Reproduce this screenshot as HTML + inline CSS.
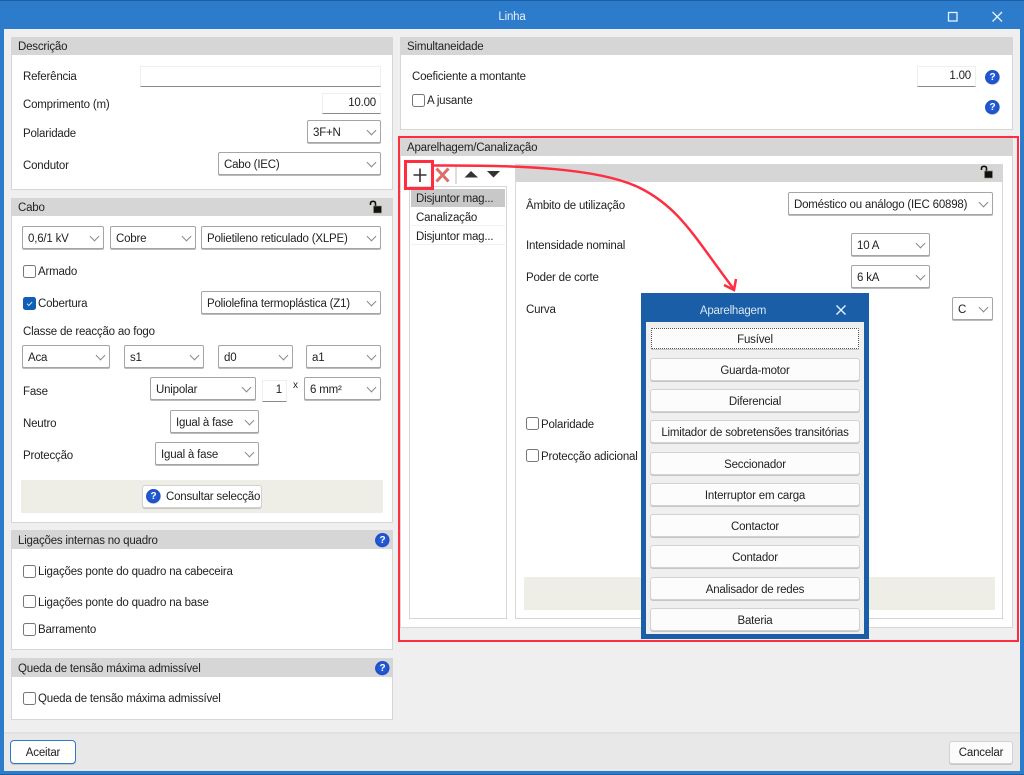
<!DOCTYPE html>
<html lang="pt"><head><meta charset="utf-8"><title>Linha</title>
<style>
html,body{margin:0;padding:0;width:1024px;height:775px;overflow:hidden;background:#2d7bcb}
body{position:relative;font:11.5px/16px "Liberation Sans",sans-serif;letter-spacing:-.2px;color:#222}
div,span{box-sizing:border-box}
.a,.t,.p,.h,.s,.i,.c,.b,.q,.l{position:absolute}
.t{white-space:nowrap;margin-top:1px}
.p{background:#fff;border:1px solid #d6d6d6}
.h{background:#d6d6d6;height:18px;line-height:20px;padding-left:7px;white-space:nowrap}
.s{background:#fff;border:1px solid #a5a5a5;border-radius:2px;padding-left:5px;line-height:25px;white-space:nowrap;box-shadow:0 1px 0 #bbb}
.s:after{content:"";position:absolute;right:5px;top:6px;width:6px;height:6px;border-right:1px solid #888;border-bottom:1px solid #888;transform:rotate(45deg)}
.i{background:#fff;border-top:1px solid #eee;border-left:1px solid #eee;border-right:1px solid #eee;border-bottom:1px solid #8a8a8a;text-align:right;padding-right:4px;line-height:19px}
.c{width:13px;height:13px;background:#fff;border:1px solid #777;border-radius:2.5px}
.b{background:#fcfcfc;border:1px solid #d2d2d2;border-radius:3px;text-align:center;line-height:25px;white-space:nowrap;box-shadow:0 1px 0 #c6c6c6}
.q{width:15px;height:15px;border-radius:50%;background:radial-gradient(circle at 48% 46%,#2a62e0 0,#1c50c4 62%,#c9d3e6 68%,#e3e7ef 82%,#7d8698 100%);color:#fff;font:bold 10px/15px "Liberation Sans",sans-serif;letter-spacing:0;text-align:center}
.l{width:15px;height:14px}
.m{position:absolute;left:646px;width:218px}
</style></head><body>

<div class="a" style="left:0;top:0;width:1024px;height:1px;background:#1a5fa8"></div>
<div class="t" style="left:0;width:1024px;top:8px;text-align:center;color:#e6f0fa">Linha</div>
<svg class="a" style="left:940px;top:8px" width="70" height="18" viewBox="0 0 70 18" fill="none" stroke="#e8f1fa" stroke-width="1.3"><rect x="8.500" y="4.500" width="8.500" height="8.500"/><path d="M52.500 4 L62 13.500 M62 4 L52.500 13.500"/></svg>

<div class="a" style="left:4px;top:29px;width:1016px;height:742px;background:#efefef"></div>
<div class="a" style="left:4px;top:732px;width:1016px;height:39px;background:#e8e8e8;border-top:2px solid #e1e1e1"></div>
<div class="a" style="left:0;top:774px;width:1024px;height:1px;background:#1a5fa8"></div>

<!-- Descrição -->
<div class="p" style="left:11px;top:37px;width:382px;height:153px"></div>
<div class="h" style="left:11px;top:37px;width:382px">Descrição</div>
<div class="t" style="left:23px;top:68px">Referência</div>
<div class="i" style="left:140px;top:66px;width:241px;height:21px"></div>
<div class="t" style="left:23px;top:96px">Comprimento (m)</div>
<div class="i" style="left:322px;top:93px;width:59px;height:21px">10.00</div>
<div class="t" style="left:23px;top:125px">Polaridade</div>
<div class="s" style="left:307px;top:120px;width:74px;height:23px">3F+N</div>
<div class="t" style="left:23px;top:157px">Condutor</div>
<div class="s" style="left:218px;top:152px;width:163px;height:23px">Cabo (IEC)</div>

<!-- Cabo -->
<div class="p" style="left:11px;top:198px;width:382px;height:325px"></div>
<div class="h" style="left:11px;top:198px;width:382px">Cabo</div>
<svg class="l" style="left:369px;top:200px" viewBox="0 0 15 14"><path d="M1.500 5 V3.500 Q1.500 1.300 4 1.300 Q6.500 1.300 6.500 3.500 V6" fill="none" stroke="#111" stroke-width="1.6"/><rect x="4.500" y="6" width="8" height="7" fill="#111" stroke="#8f8f6a" stroke-width=".6"/></svg>
<div class="s" style="left:22px;top:226px;width:82px;height:23px">0,6/1 kV</div>
<div class="s" style="left:110px;top:226px;width:86px;height:23px">Cobre</div>
<div class="s" style="left:201px;top:226px;width:180px;height:23px">Polietileno reticulado (XLPE)</div>
<div class="c" style="left:23px;top:265px"></div>
<div class="t" style="left:38px;top:263px">Armado</div>
<div class="c" style="left:23px;top:297px;background:#0f5fb4;border-color:#0f5fb4"></div>
<svg class="a" style="left:23px;top:297px" width="13" height="13" fill="none" stroke="#cfe2f6" stroke-width="1"><path d="M4 6.700 L5.800 8.500 L9.200 5"/></svg>
<div class="t" style="left:38px;top:295px">Cobertura</div>
<div class="s" style="left:201px;top:291px;width:180px;height:23px">Poliolefina termoplástica (Z1)</div>
<div class="t" style="left:23px;top:323px">Classe de reacção ao fogo</div>
<div class="s" style="left:22px;top:345px;width:88px;height:23px">Aca</div>
<div class="s" style="left:124px;top:345px;width:80px;height:23px">s1</div>
<div class="s" style="left:218px;top:345px;width:75px;height:23px">d0</div>
<div class="s" style="left:306px;top:345px;width:75px;height:23px">a1</div>
<div class="t" style="left:23px;top:383px">Fase</div>
<div class="s" style="left:150px;top:377px;width:106px;height:23px">Unipolar</div>
<div class="i" style="left:262px;top:380px;width:25px;height:22px">1</div>
<div class="t" style="left:293px;top:377px;font-size:10px">x</div>
<div class="s" style="left:304px;top:377px;width:77px;height:23px">6 mm²</div>
<div class="t" style="left:23px;top:415px">Neutro</div>
<div class="s" style="left:170px;top:410px;width:89px;height:23px">Igual à fase</div>
<div class="t" style="left:23px;top:447px">Protecção</div>
<div class="s" style="left:155px;top:442px;width:104px;height:23px">Igual à fase</div>
<div class="a" style="left:21px;top:480px;width:362px;height:33px;background:#eeeee6"></div>
<div class="b" style="left:142px;top:485px;width:120px;height:23px;text-align:left;padding-left:23px;background:#fff;line-height:23px">Consultar selecção</div>
<div class="q" style="left:146px;top:489px">?</div>

<!-- Ligações -->
<div class="p" style="left:11px;top:530px;width:382px;height:120px"></div>
<div class="h" style="left:11px;top:530px;width:382px;height:19px;line-height:23px">Ligações internas no quadro</div>
<div class="q" style="left:375px;top:533px">?</div>
<div class="c" style="left:23px;top:565px"></div>
<div class="t" style="left:38px;top:563px">Ligações ponte do quadro na cabeceira</div>
<div class="c" style="left:23px;top:595px"></div>
<div class="t" style="left:38px;top:594px">Ligações ponte do quadro na base</div>
<div class="c" style="left:23px;top:623px"></div>
<div class="t" style="left:38px;top:621px">Barramento</div>

<!-- Queda -->
<div class="p" style="left:11px;top:658px;width:382px;height:62px"></div>
<div class="h" style="left:11px;top:658px;width:382px;height:19px;line-height:23px">Queda de tensão máxima admissível</div>
<div class="q" style="left:375px;top:661px">?</div>
<div class="c" style="left:23px;top:692px"></div>
<div class="t" style="left:38px;top:690px">Queda de tensão máxima admissível</div>

<!-- Simultaneidade -->
<div class="p" style="left:400px;top:37px;width:613px;height:93px"></div>
<div class="h" style="left:400px;top:37px;width:613px">Simultaneidade</div>
<div class="t" style="left:412px;top:68px">Coeficiente a montante</div>
<div class="i" style="left:917px;top:66px;width:59px;height:21px">1.00</div>
<div class="q" style="left:985px;top:70px">?</div>
<div class="c" style="left:412px;top:94px"></div>
<div class="t" style="left:427px;top:92px">A jusante</div>
<div class="q" style="left:985px;top:100px">?</div>

<!-- Aparelhagem/Canalização -->
<div class="p" style="left:400px;top:138px;width:613px;height:490px"></div>
<div class="h" style="left:400px;top:138px;width:613px">Aparelhagem/Canalização</div>
<svg class="a" style="left:404px;top:162px" width="105" height="26" viewBox="0 0 105 26"><path d="M16 6.500 V20 M9.500 13 H22.500" stroke="#333" stroke-width="1.6" fill="none"/><path d="M32.500 6.500 L44.500 19.500 M44.500 6.500 L32.500 19.500" stroke="#d9706c" stroke-width="3" fill="none"/><path d="M52 4 V22" stroke="#bbb" stroke-width="1"/><path d="M60.500 15.500 L67 9 L74 15.500 Z M83 9 L96 9 L89.500 15.500 Z" fill="#333"/></svg>
<div class="p" style="left:409px;top:186px;width:98px;height:433px"></div>
<div class="a" style="left:411px;top:189px;width:94px;height:18px;background:#c8c8c8"></div>
<div class="t" style="left:416px;top:190px">Disjuntor mag...</div>
<div class="a" style="left:411px;top:207px;width:94px;height:19px;border-bottom:1px solid #f1f1f1"></div>
<div class="t" style="left:416px;top:209px">Canalização</div>
<div class="a" style="left:411px;top:226px;width:94px;height:19px;border-bottom:1px solid #f1f1f1"></div>
<div class="t" style="left:416px;top:228px">Disjuntor mag...</div>

<div class="p" style="left:515px;top:164px;width:488px;height:455px"></div>
<div class="h" style="left:515px;top:164px;width:488px"></div>
<svg class="l" style="left:980px;top:165px" viewBox="0 0 15 14"><path d="M1.500 5 V3.500 Q1.500 1.300 4 1.300 Q6.500 1.300 6.500 3.500 V6" fill="none" stroke="#111" stroke-width="1.6"/><rect x="4.500" y="6" width="8" height="7" fill="#111" stroke="#8f8f6a" stroke-width=".6"/></svg>
<div class="t" style="left:526px;top:197px">Âmbito de utilização</div>
<div class="s" style="left:788px;top:192px;width:205px;height:23px">Doméstico ou análogo (IEC 60898)</div>
<div class="t" style="left:526px;top:237px">Intensidade nominal</div>
<div class="s" style="left:851px;top:233px;width:79px;height:23px">10 A</div>
<div class="t" style="left:526px;top:269px">Poder de corte</div>
<div class="s" style="left:851px;top:265px;width:79px;height:23px">6 kA</div>
<div class="t" style="left:526px;top:301px">Curva</div>
<div class="s" style="left:952px;top:297px;width:41px;height:23px">C</div>
<div class="c" style="left:526px;top:417px"></div>
<div class="t" style="left:541px;top:416px">Polaridade</div>
<div class="c" style="left:526px;top:449px"></div>
<div class="t" style="left:541px;top:448px">Protecção adicional</div>
<div class="a" style="left:524px;top:577px;width:471px;height:33px;background:#eeeee6"></div>

<!-- Red annotations -->
<div class="a" style="left:398px;top:136px;width:621px;height:506px;border:2.500px solid #ff2d40"></div>
<div class="a" style="left:404px;top:160px;width:30px;height:30px;border:3px solid #ff2d40"></div>
<svg class="a" style="left:0;top:0" width="1024" height="775" fill="none" stroke="#ff2d40" stroke-width="2.500"><path d="M433 165.500 C520 165 600 168 640 188 C680 208 695 238 733 288"/><path d="M724 285 L734 290 L736 279"/></svg>

<!-- Dialog -->
<div class="a" style="left:641px;top:293px;width:228px;height:346px;background:#1a5ea8"></div>
<div class="t" style="left:641px;width:184px;top:302px;text-align:center;color:#dbe7f4">Aparelhagem</div>
<svg class="a" style="left:834px;top:303px" width="14" height="14" fill="none" stroke="#e8f1fa" stroke-width="1.400"><path d="M2.500 2.500 L11.500 11.500 M11.500 2.500 L2.500 11.500"/></svg>
<div class="m" style="top:322px;height:312px;background:#efefef"></div>
<div class="b" style="left:651px;top:328px;width:208px;height:21px;line-height:23px;border:1px dotted #555;border-radius:1px">Fusível</div>
<div class="b" style="left:650px;top:358px;width:210px;height:23px">Guarda-motor</div>
<div class="b" style="left:650px;top:389px;width:210px;height:23px">Diferencial</div>
<div class="b" style="left:650px;top:420px;width:210px;height:23px">Limitador de sobretensões transitórias</div>
<div class="b" style="left:650px;top:452px;width:210px;height:23px">Seccionador</div>
<div class="b" style="left:650px;top:483px;width:210px;height:23px">Interruptor em carga</div>
<div class="b" style="left:650px;top:514px;width:210px;height:23px">Contactor</div>
<div class="b" style="left:650px;top:545px;width:210px;height:23px">Contador</div>
<div class="b" style="left:650px;top:577px;width:210px;height:23px">Analisador de redes</div>
<div class="b" style="left:650px;top:608px;width:210px;height:23px">Bateria</div>

<!-- Footer buttons -->
<div class="b" style="left:10px;top:740px;width:66px;height:24px;border:1px solid #2d7bcb;border-radius:4px;line-height:24px;background:#fff">Aceitar</div>
<div class="b" style="left:949px;top:741px;width:64px;height:23px;background:#fbfbfb;line-height:23px">Cancelar</div>
</body></html>
